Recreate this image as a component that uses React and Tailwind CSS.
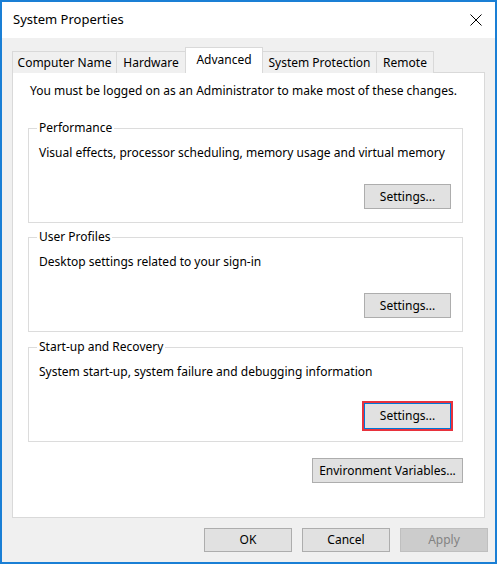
import React from "react";

const font = { fontFamily: '"Noto Sans", "Liberation Sans", Arial, sans-serif' };

function Btn({ children, className = "" }) {
  return (
    <div
      className={`flex items-center justify-center bg-[#e1e1e1] border border-[#adadad] text-[12px] text-black leading-none ${className}`}
    >
      {children}
    </div>
  );
}

function Group({ title, text, highlight, className = "" }) {
  return (
    <fieldset className={`ml-[15px] w-[435px] h-[103px] border border-[#dcdcdc] pl-[10px] pr-[11px] ${className}`}>
      <legend className="ml-[-2px] px-[2px] text-[12px] leading-[16px] text-black">{title}</legend>
      <div className="mt-[9px] text-[12px] leading-[16px] text-black">{text}</div>
      <div className="flex justify-end mt-[23px]">
        {highlight ? (
          <div className="ring-2 ring-[#e8323d]">
            <Btn className="w-[87px] h-[26px] !border-[#0078d7]">Settings...</Btn>
          </div>
        ) : (
          <Btn className="w-[87px] h-[25px]">Settings...</Btn>
        )}
      </div>
    </fieldset>
  );
}

export default function App() {
  const tabs = [
    { name: "Computer Name", w: 105 },
    { name: "Hardware", w: 70 },
    { name: "Advanced", w: 78, active: true },
    { name: "System Protection", w: 115 },
    { name: "Remote", w: 58 },
  ];
  return (
    <div style={font} className="w-[497px] h-[564px] bg-[#f0f0f0] border-2 border-[#1a7fd5] flex flex-col overflow-hidden">
      <div className="h-[36px] bg-white flex items-center justify-between pl-[11px] pr-[12px] shrink-0">
        <span className="text-[13px] text-black">System Properties</span>
        <svg width="12" height="12" viewBox="0 0 12 12" className="mr-[1px]">
          <path d="M0.5 0.5 L11.5 11.5 M11.5 0.5 L0.5 11.5" stroke="#000" strokeWidth="1" fill="none" />
        </svg>
      </div>
      <div className="px-[10px] pt-[9px] flex flex-col">
        <div className="flex items-end h-[26px] relative z-10 mb-[-1px]">
          {tabs.map((t, i) =>
            t.active ? (
              <div
                key={t.name}
                style={{ width: t.w }}
                className="h-[26px] ml-[-1px] bg-white border border-b-0 border-[#d9d9d9] flex items-start justify-center pt-[4px] text-[12px] leading-[16px] text-black"
              >
                {t.name}
              </div>
            ) : (
              <div
                key={t.name}
                style={{ width: t.w }}
                className={`h-[22px] ${i === 0 ? "" : "ml-[-1px]"} bg-[#f0f0f0] border border-b-0 border-[#d9d9d9] flex items-center justify-center text-[12px] leading-[16px] text-black`}
              >
                {t.name}
              </div>
            )
          )}
        </div>
        <div className="h-[446px] bg-white border border-[#d9d9d9] flex flex-col">
          <div className="pl-[17px] pt-[10px] text-[12px] leading-[16px] text-black">
            You must be logged on as an Administrator to make most of these changes.
          </div>
          <Group className="mt-[21px]" title="Performance" text="Visual effects, processor scheduling, memory usage and virtual memory" />
          <Group className="mt-[6px]" title="User Profiles" text="Desktop settings related to your sign-in" />
          <Group className="mt-[7px]" title="Start-up and Recovery" text="System start-up, system failure and debugging information" highlight />
          <div className="flex justify-end mr-[21px] mt-[16px]">
            <Btn className="w-[151px] h-[25px]">Environment Variables...</Btn>
          </div>
        </div>
      </div>
      <div className="flex justify-end gap-[10px] pr-[7px] mt-[10px]">
        <Btn className="w-[88px] h-[24px]">OK</Btn>
        <Btn className="w-[88px] h-[24px]">Cancel</Btn>
        <Btn className="w-[88px] h-[24px] !bg-[#cccccc] !border-[#bfbfbf] !text-[#838383]">Apply</Btn>
      </div>
    </div>
  );
}
